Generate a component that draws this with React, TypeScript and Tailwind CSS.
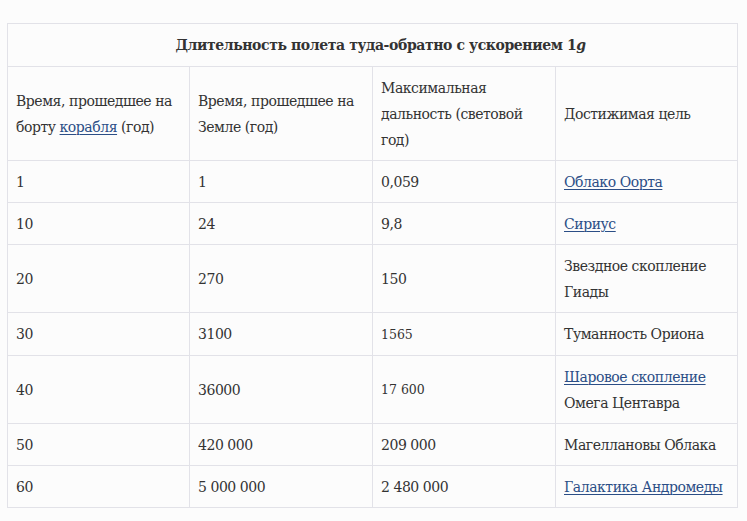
import React from "react";

const L = ({ children }: { children: React.ReactNode }) => (
  <a href="#" className="text-[#2b4e86] underline underline-offset-2 decoration-1">
    {children}
  </a>
);

type Row = [React.ReactNode, React.ReactNode, React.ReactNode, React.ReactNode, boolean?];

const rows: Row[] = [
  ["1", "1", "0,059", <L>Облако Оорта</L>],
  ["10", "24", "9,8", <L>Сириус</L>],
  ["20", "270", "150", <>Звездное скопление Гиады</>],
  ["30", "3100", "1565", <>Туманность Ориона</>, true],
  ["40", "36000", "17 600", <><L>Шаровое скопление</L> Омега Центавра</>, true],
  ["50", "420 000", "209 000", <>Магеллановы Облака</>],
  ["60", "5 000 000", "2 480 000", <L>Галактика Андромеды</L>],
];

export default function App() {
  const td = "border border-[#e2e2e8] px-[8px] py-[7.5px] align-middle text-left";
  return (
    <div
      className="w-[747px] h-[521px] bg-[#fcfcfc] pt-[23px] pl-[7px] text-[#333] text-[14px] leading-[26px] tracking-[-0.45px]"
      style={{ fontFamily: '"DejaVu Serif", "Liberation Serif", serif' }}
    >
      <table className="w-[730px] border-collapse table-fixed">
        <colgroup>
          <col className="w-[182px]" />
          <col className="w-[183px]" />
          <col className="w-[183px]" />
          <col className="w-[182px]" />
        </colgroup>
        <thead>
          <tr>
            <th colSpan={4} className="border border-[#e2e2e8] h-[43px] py-0 pl-[16px] text-center font-bold tracking-[-0.4px]">
              Длительность полета туда-обратно с ускорением 1<i>g</i>
            </th>
          </tr>
        </thead>
        <tbody>
          <tr className="h-[94px]">
            <td className={td}>
              Время, прошедшее на борту <L>корабля</L> (год)
            </td>
            <td className={td}>Время, прошедшее на Земле (год)</td>
            <td className={td}>Максимальная дальность (световой год)</td>
            <td className={td}>Достижимая цель</td>
          </tr>
          {rows.map((r, i) => (
            <tr key={i}>
              <td className={td}>{r[0]}</td>
              <td className={td}>{r[1]}</td>
              <td className={td}>
                {r[4] ? <span className="text-[12.5px] tracking-normal">{r[2]}</span> : r[2]}
              </td>
              <td className={td}>{r[3]}</td>
            </tr>
          ))}
        </tbody>
      </table>
    </div>
  );
}
